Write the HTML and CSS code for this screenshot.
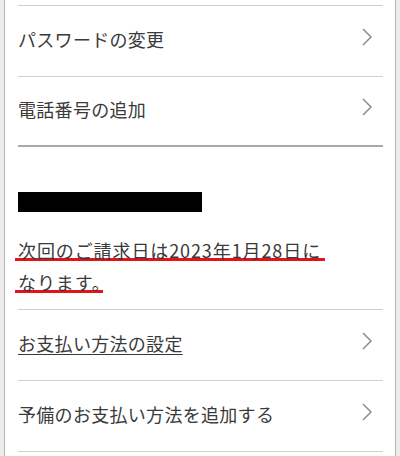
FILE: index.html
```html
<!DOCTYPE html>
<html lang="ja">
<head>
    <meta charset="UTF-8">
    <meta name="viewport" content="width=device-width, initial-scale=1.0">
    <title>アカウント設定</title>
    <link rel="stylesheet" href="styles.css">
</head>
<body>
    <div class="page">
        <ul class="menu menu-top">
            <li class="menu-item">
                <span class="menu-label">パスワードの変更</span>
                <svg class="chevron" viewBox="0 0 10 18"><path d="M1 1 L9 9 L1 17"/></svg>
            </li>
            <li class="menu-item menu-item-last">
                <span class="menu-label">電話番号の追加</span>
                <svg class="chevron" viewBox="0 0 10 18"><path d="M1 1 L9 9 L1 17"/></svg>
            </li>
        </ul>

        <section class="billing">
            <div class="redacted"></div>
            <p class="billing-note"><span class="marked">次回のご請求日は2023年1月28日に</span><br><span class="marked marked-end">なります。</span></p>
        </section>

        <ul class="menu">
            <li class="menu-item">
                <a class="menu-label menu-link">お支払い方法の設定</a>
                <svg class="chevron" viewBox="0 0 10 18"><path d="M1 1 L9 9 L1 17"/></svg>
            </li>
            <li class="menu-item">
                <span class="menu-label">予備のお支払い方法を追加する</span>
                <svg class="chevron" viewBox="0 0 10 18"><path d="M1 1 L9 9 L1 17"/></svg>
            </li>
        </ul>
    </div>
</body>
</html>
```

FILE: styles.css
```css
html, body {
    margin: 0;
    padding: 0;
}
body {
    background: #ececec;
    font-family: "Noto Sans CJK JP", "Noto Sans", sans-serif;
    color: #3a3a3a;
}
.page {
    background: white;
    margin: 0 4px;
    height: 456px;
    border-left: 1px solid #b4b4b4;
    border-right: 1px solid #b4b4b4;
    padding: 5px 12px 0 13px;
    box-sizing: border-box;
}
.menu {
    list-style: none;
    margin: 0;
    padding: 0;
}
.menu-top {
    border-top: 1px solid #cfcfcf;
}
.menu-item {
    display: flex;
    align-items: center;
    justify-content: space-between;
    height: 71px;
    padding-bottom: 5px;
    box-sizing: border-box;
    border-bottom: 1px solid #cfcfcf;
}
.menu-item-last {
    height: 70px;
    border-bottom: 2px solid #a9a9a9;
}
.menu-label {
    font-size: 18px;
    letter-spacing: 0.3px;
}
.menu-link {
    color: inherit;
    text-decoration: underline;
    text-underline-offset: 3px;
    text-decoration-thickness: 1px;
}
.chevron {
    width: 10px;
    height: 18px;
    margin: 0 11px 4px 0;
    fill: none;
    stroke: #8a8a8a;
    stroke-width: 1.5;
}
.billing {
    padding: 45px 0 11px;
    border-bottom: 1px solid #cfcfcf;
}
.redacted {
    width: 184px;
    height: 20px;
    background: #000;
}
.billing-note {
    margin: 22px 0 0;
    font-size: 18px;
    line-height: 32px;
    letter-spacing: 0.9px;
}
.marked {
    padding: 0 4px 0 3px;
    margin-left: -3px;
    background: linear-gradient(#e1141b, #e1141b) no-repeat left bottom 2px / 100% 3px;
    -webkit-box-decoration-break: clone;
    box-decoration-break: clone;
}
.marked-end {
    background-size: calc(100% - 12px) 3px;
}
```
